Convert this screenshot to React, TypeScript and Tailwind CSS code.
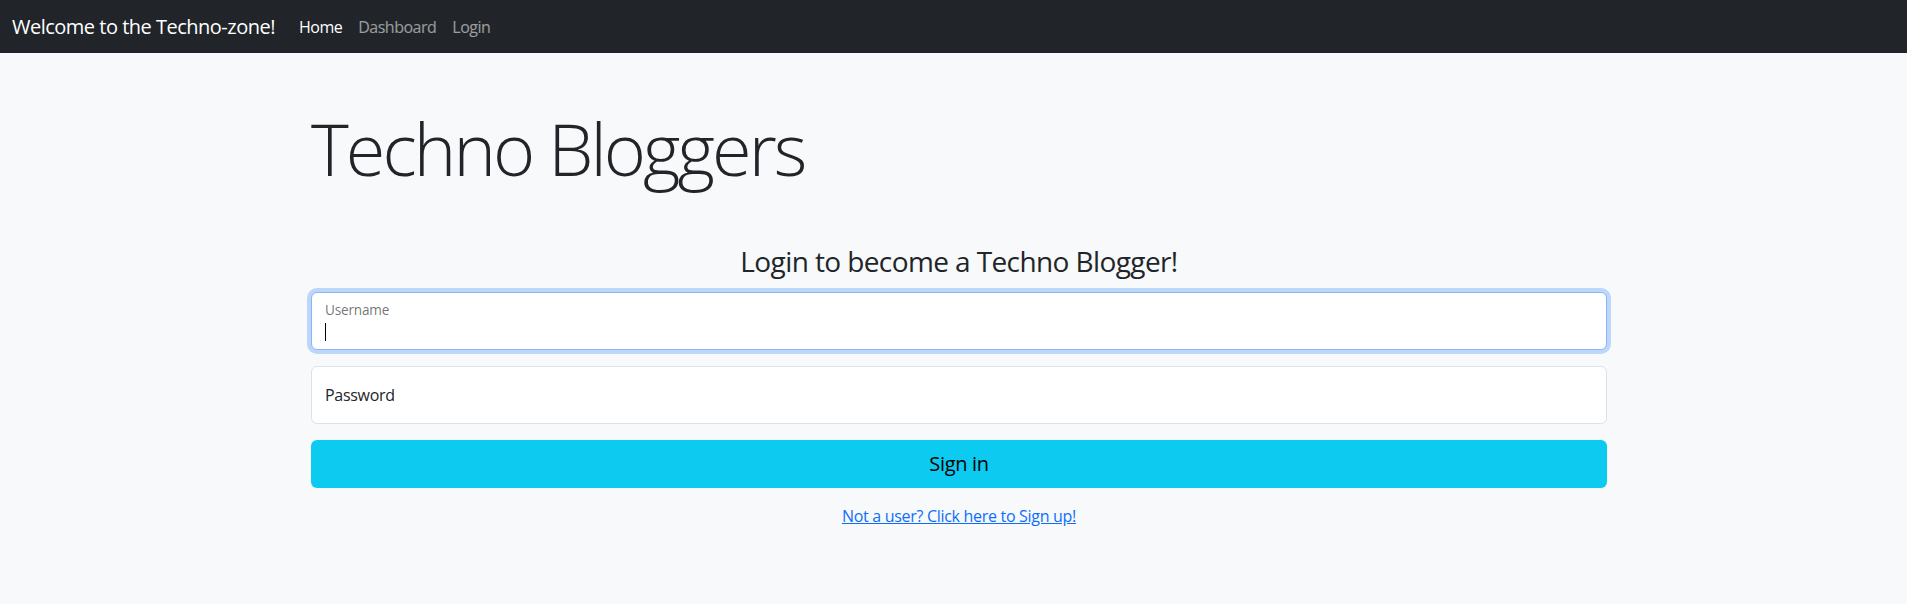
import React, { useState } from "react";

const font = { fontFamily: '"Open Sans", "Noto Sans", sans-serif' };

const App = () => {
  const [username, setUsername] = useState<string>("");
  const [password, setPassword] = useState<string>("");

  return (
    <div className="min-h-[604px] bg-[#f8f9fa] text-[#212529] font-['Open_Sans',sans-serif]">
      <nav className="h-[53px] bg-[#212529] flex items-center px-3">
        <a href="#" className="text-[20px] text-white mr-4 tracking-[-0.5px]">
          Welcome to the Techno-zone!
        </a>
        <ul className="flex flex-row items-center text-[16px] tracking-[-0.5px]">
          <li>
            <a href="#" className="px-2 text-white">Home</a>
          </li>
          <li>
            <a href="#" className="px-2 text-white/55">Dashboard</a>
          </li>
          <li>
            <a href="#" className="px-2 text-white/55">Login</a>
          </li>
        </ul>
      </nav>

      <main className="ml-[311px] w-[1296px] flex flex-col">
        <h1 className="mt-[52px] text-[72px] leading-[1.2] font-light tracking-[-2.9px]">Techno Bloggers</h1>

        <h3 className="mt-[54px] text-center text-[28px] leading-[1.2] tracking-[-0.6px]">Login to become a Techno Blogger!</h3>

        <form className="mt-[13px] flex flex-col gap-4" onSubmit={(e) => e.preventDefault()}>
          <div className="relative h-[58px] bg-white border border-[#86b7fe] rounded-[6px] shadow-[0_0_0_4px_rgba(13,110,253,0.25)]">
            <label className="absolute left-[13px] top-[7px] text-[13.6px] text-[#212529]/65 tracking-[-0.2px]">Username</label>
            <input
              className="w-full h-full pl-3 pt-[26px] pb-[10px] bg-transparent outline-none text-[16px]"
              value={username}
              onChange={(e) => setUsername(e.target.value)}
            />
            {username === "" ? <span className="absolute left-[13px] top-[30px] w-px h-[18px] bg-black" /> : null}
          </div>

          <div className="relative h-[58px] bg-white border border-[#dee2e6] rounded-[6px] flex items-center">
            {password === "" ? (
              <span className="absolute left-[13px] text-[16px] text-[#212529] tracking-[-0.3px] pointer-events-none">Password</span>
            ) : null}
            <input
              type="password"
              className="w-full h-full px-3 bg-transparent outline-none text-[16px]"
              value={password}
              onChange={(e) => setPassword(e.target.value)}
            />
          </div>

          <button type="submit" className="h-[48px] bg-[#0dcaf0] text-black text-[20px] rounded-[6px] tracking-[-0.3px]">
            Sign in
          </button>
        </form>

        <div className="mt-4 text-center" style={font}>
          <a href="#" className="text-[16px] text-[#0d6efd] underline tracking-[-0.3px]">
            Not a user? Click here to Sign up!
          </a>
        </div>
      </main>
    </div>
  );
};

export default App;
